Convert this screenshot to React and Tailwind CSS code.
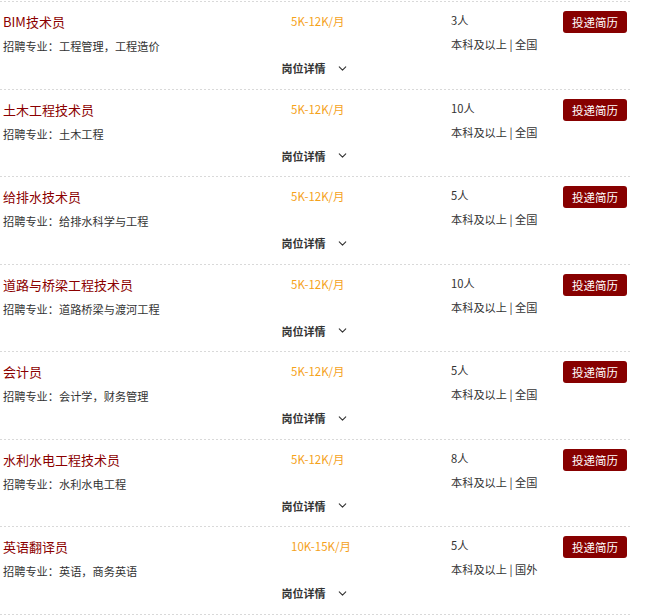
import React from 'react';
import { ChevronDown } from 'lucide-react';

const jobs = [
  { title: 'BIM技术员', major: '工程管理，工程造价', salary: '5K-12K/月', count: '3人', area: '全国' },
  { title: '土木工程技术员', major: '土木工程', salary: '5K-12K/月', count: '10人', area: '全国' },
  { title: '给排水技术员', major: '给排水科学与工程', salary: '5K-12K/月', count: '5人', area: '全国' },
  { title: '道路与桥梁工程技术员', major: '道路桥梁与渡河工程', salary: '5K-12K/月', count: '10人', area: '全国' },
  { title: '会计员', major: '会计学，财务管理', salary: '5K-12K/月', count: '5人', area: '全国' },
  { title: '水利水电工程技术员', major: '水利水电工程', salary: '5K-12K/月', count: '8人', area: '全国' },
  { title: '英语翻译员', major: '英语，商务英语', salary: '10K-15K/月', count: '5人', area: '国外' },
];

const DashLine = () => (
  <div className="h-px w-full bg-[linear-gradient(to_right,#d9d9d9_50%,transparent_50%)] bg-[length:4px_1px]" />
);

const JobRow = ({ job }) => (
  <div className="h-[87.5px]">
    <DashLine />
    <div className="flex items-start pt-[10px]">
      <div className="w-[288px] pl-[3px]">
        <div className="text-[13px] leading-[20px] text-[#8b0000]">{job.title}</div>
        <div className="mt-[5px] text-[11.2px] leading-[18px] text-[#333]">招聘专业：{job.major}</div>
      </div>
      <div className="w-[160px] pl-[3px] text-[11.5px] leading-[18px] text-[#f5a21b]">{job.salary}</div>
      <div className="w-[115px] pl-[3px] text-[11.2px] text-[#333]">
        <div className="leading-[16px]">{job.count}</div>
        <div className="mt-[8px] leading-[16px]">本科及以上 | {job.area}</div>
      </div>
      <button className="-mt-px h-[22px] w-[64px] rounded-[3px] bg-[#870000] text-[11.5px] leading-[22px] text-white">
        投递简历
      </button>
    </div>
    <div className="mt-[4px] flex items-center justify-center text-[11px] leading-[18px] font-bold text-[#333]">
      <span>岗位详情</span>
      <ChevronDown className="ml-[10px] text-[#333]" size={13} strokeWidth={2} />
    </div>
  </div>
);

export default function App() {
  return (
    <div className="w-[630px] bg-white pt-px font-['Noto_Sans_CJK_SC','Noto_Sans',sans-serif]">
      {jobs.map((job) => (
        <JobRow key={job.title} job={job} />
      ))}
      <DashLine />
    </div>
  );
}
